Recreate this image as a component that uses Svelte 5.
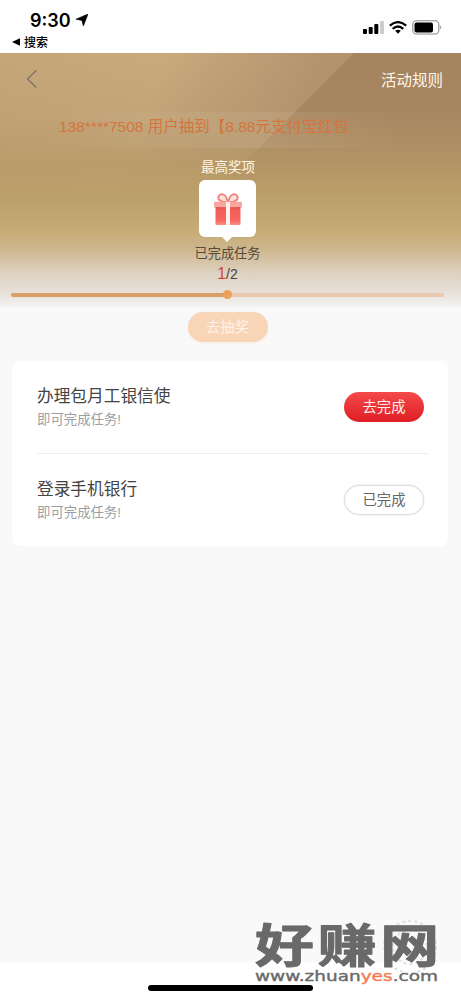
<script>
    let winner = '138****7508 用户抽到【8.88元支付宝红包';
    let done = 1;
    let total = 2;

    let tasks = [
        { title: '办理包月工银信使', note: '即可完成任务!', finished: false },
        { title: '登录手机银行', note: '即可完成任务!', finished: true }
    ];
</script>

<div class="screen">
    <header class="status">
        <div class="status-left">
            <div class="time">
                <span>9:30</span>
                <svg width="12" height="12" viewBox="0 0 12 12"><path d="M12 0L7.4 12L5.9 6.4L0 5.2Z" stroke="#000" stroke-width=".6" /></svg>
            </div>
            <div class="return">
                <svg width="8" height="8" viewBox="0 0 8 8"><path d="M0 4L8 .3V7.7Z" /></svg>
                <span>搜索</span>
            </div>
        </div>
        <div class="status-right">
            <svg width="21" height="13" viewBox="0 0 21 13">
                <rect x="0" y="8" width="4" height="5" rx="1" />
                <rect x="5.7" y="6" width="4" height="7" rx="1" />
                <rect x="11.3" y="3" width="4" height="10" rx="1" />
                <rect x="17" y="0" width="4" height="13" rx="1" fill="#ccc" />
            </svg>
            <svg width="18" height="13" viewBox="0 0 18 13" fill="none" stroke="#000" stroke-width="2.2">
                <path d="M.8 4.7Q9-2.5 17.2 4.7" />
                <path d="M3.7 7.8Q9 3.2 14.3 7.8" />
                <path d="M6.2 9.7Q9 7.8 11.8 9.7L9 12.8Z" fill="#000" stroke="none" />
            </svg>
            <svg width="30" height="15" viewBox="0 0 30 15">
                <rect x=".8" y=".8" width="26" height="13.2" rx="3.6" fill="none" stroke="#8c8c8c" stroke-width="1.1" />
                <rect x="2.5" y="2.5" width="18.5" height="10" rx="2" />
                <path d="M28.2 5.2Q30.4 7.4 28.2 9.6Z" fill="#999" />
            </svg>
        </div>
    </header>

    <section class="hero">
        <nav>
            <svg width="12" height="20" viewBox="0 0 12 20" fill="none" stroke="#7f7466" stroke-width="1.4">
                <path d="M10.2 1.5L1.5 10L10.2 18.5" />
            </svg>
            <span>活动规则</span>
        </nav>
        <div class="ticker">{winner}</div>
        <div class="top-prize">最高奖项</div>
        <div class="prize">
            <svg width="30" height="34" viewBox="0 0 30 34">
                <defs>
                    <linearGradient id="box" x2="0" y2="1">
                        <stop offset="0" stop-color="#f05a55" />
                        <stop offset="0.75" stop-color="#f7665f" />
                        <stop offset="1" stop-color="#f79188" />
                    </linearGradient>
                </defs>
                <g fill="#fde0d8" stroke="#ec7f77" stroke-width="1.7">
                    <path d="M14.5 10C9 10.5 4 8 5.5 4.5C7.500 .5 13.500 1.500 14.500 10Z" />
                    <path d="M15.5 10C21 10.5 26 8 24.500 4.500C22.500 .5 16.500 1.500 15.500 10Z" />
                </g>
                <rect x="2.5" y="14" width="25" height="19" rx="1" fill="url(#box)" />
                <rect x="1" y="9.8" width="28" height="5.7" rx="1" fill="#f9a79e" />
                <path d="M2.5 15.8H27.5" stroke="#e0504c" />
                <path d="M13 9.8H17V33H13Z" fill="#fff0e9" />
            </svg>
        </div>
        <div class="done-label">已完成任务</div>
        <div class="count"><b>{done}</b>/{total}</div>
        <div class="progress">
            <div class="bar" style="width: {(done / total) * 100}%"></div>
        </div>
    </section>

    <main>
        <button class="draw">去抽奖</button>
        <div class="card">
            {#each tasks as task}
                <div class="task">
                    <div>
                        <h3>{task.title}</h3>
                        <p>{task.note}</p>
                    </div>
                    <button class:finished={task.finished}>{task.finished ? '已完成' : '去完成'}</button>
                </div>
            {/each}
        </div>
    </main>

    <footer>
        <div class="home-bar"></div>
    </footer>

    <svg class="watermark" width="190" height="70" viewBox="0 0 190 70">
        <g fill="none" stroke="#e0e0e0" stroke-width="2" stroke-dasharray="3 3">
            <circle cx="157" cy="27" r="26" />
            <circle cx="157" cy="27" r="17" />
            <circle cx="157" cy="27" r="8" />
        </g>
        <text class="brand" x="2" y="41.5" textLength="188" lengthAdjust="spacingAndGlyphs">好赚网</text>
        <text class="url" x="2" y="60.5" textLength="183" lengthAdjust="spacingAndGlyphs">www.zhuan<tspan class="accent">yes</tspan>.com</text>
    </svg>
</div>

<style>
    :global(body) {
        margin: 0;
        background: #fff;
    }

    .screen {
        position: relative;
        display: flex;
        flex-direction: column;
        width: 461px;
        height: 1000px;
        overflow: hidden;
        font-family: "Liberation Sans", "Noto Sans CJK SC", sans-serif;
        color: #444;
    }

    .status {
        display: flex;
        justify-content: space-between;
        box-sizing: border-box;
        height: 53px;
        padding: 9px 19px 0 12px;
        color: #000;
        background: #fefefe;
    }

    .time {
        display: flex;
        align-items: center;
        gap: 5px;
        height: 22px;
        padding-left: 18px;
        font: 600 18px/23px Inter, sans-serif;
    }

    .return {
        display: flex;
        align-items: center;
        gap: 4px;
        height: 21px;
        font-size: 12px;
        font-weight: 500;
    }

    .status-right {
        display: flex;
        align-items: center;
        gap: 5px;
        height: 37px;
    }

    .hero {
        display: flex;
        flex-direction: column;
        align-items: center;
        height: 254px;
        background:
            linear-gradient(to bottom, rgba(178, 148, 104, 0) 0%, rgba(178, 148, 104, 0.25) 25%, rgba(182, 152, 104, 0.8) 43%, #bca069 57%, #c6aa73 69%, #cdb68d 77%, #ded2c1 87%, #e8e2dc 95%, #f4f3f2 100%),
            linear-gradient(135deg, transparent 49.4%, #a4835e 49.6%),
            linear-gradient(112deg, #c5a679 0%, #c8aa7d 30%, #b3936e 58%, #ae8e69 100%);
    }

    nav {
        display: flex;
        justify-content: space-between;
        align-items: center;
        box-sizing: border-box;
        width: 100%;
        height: 52px;
        padding: 0 18px 0 26px;
        font-size: 15.5px;
        color: #fff5e8;
    }

    .ticker {
        box-sizing: border-box;
        width: 345px;
        height: 36px;
        margin-top: 7px;
        padding-left: 1px;
        font-size: 15.5px;
        line-height: 30px;
        white-space: nowrap;
        color: #d5753c;
        background: linear-gradient(to right, transparent, rgba(255, 255, 255, 0.08) 60%, transparent);
    }

    .top-prize {
        margin-top: 9px;
        margin-right: 5px;
        font-size: 13.5px;
        line-height: 22px;
        color: #fff5e6;
    }

    .prize {
        position: relative;
        display: flex;
        justify-content: center;
        align-items: center;
        width: 57px;
        height: 57px;
        margin-top: 1px;
        margin-right: 6px;
        border-radius: 6px;
        background: #fff;
    }

    .prize::after {
        content: '';
        position: absolute;
        bottom: -5px;
        left: 23px;
        border: 5px solid transparent;
        border-top-color: #fff;
        border-bottom: 0;
    }

    .done-label {
        margin-top: 7px;
        margin-right: 6px;
        font-size: 13.2px;
        line-height: 20px;
        color: #554939;
    }

    .count {
        height: 20px;
        margin-right: 6px;
        font-size: 14px;
        line-height: 20px;
    }

    .count b {
        font-size: 16px;
        font-weight: 400;
        color: #d6453b;
    }

    .progress {
        width: 433px;
        height: 4px;
        margin-top: 9px;
        margin-right: 6px;
        border-radius: 2px;
        background: #eac9ad;
    }

    .bar {
        position: relative;
        height: 4px;
        border-radius: 2px;
        background: #d9a065;
    }

    .bar::after {
        content: '';
        position: absolute;
        top: -3px;
        right: -4.5px;
        width: 9px;
        height: 9px;
        border-radius: 50%;
        background: #eba05c;
    }

    main {
        display: flex;
        flex: 1;
        flex-direction: column;
        align-items: center;
        background: #f9f9f9;
    }

    button {
        box-sizing: border-box;
        width: 80px;
        height: 30px;
        padding: 0;
        border: 0;
        border-radius: 15px;
        font: inherit;
        font-size: 14.3px;
        line-height: 30px;
        color: #ffecec;
        background: linear-gradient(#f4494a, #df1e25);
    }

    .draw {
        margin-top: 5px;
        margin-right: 6px;
        color: #fff3e8;
        background: #f9d5b8;
        box-shadow: 0 1px 3px #faeadd;
    }

    .card {
        box-sizing: border-box;
        width: 436px;
        height: 185px;
        margin-top: 19px;
        margin-right: 1px;
        padding: 0 20px 0 25px;
        border-radius: 8px;
        background: #fff;
    }

    .task {
        display: flex;
        justify-content: space-between;
        box-sizing: border-box;
        height: 92px;
        padding: 23px 4px 0 0;
    }

    .task + .task {
        border-top: 1px solid #eee;
    }

    .task button {
        margin-top: 8px;
    }

    .task .finished {
        border: 1px solid #dedede;
        line-height: 28px;
        color: #666;
        background: #fff;
        box-shadow: 0 0 2px #ddd;
    }

    h3 {
        margin: 0;
        font-size: 16.7px;
        font-weight: 400;
        line-height: 26px;
        color: #444;
    }

    p {
        margin: 0;
        font-size: 13.4px;
        line-height: 20px;
        color: #9b9fa2;
    }

    footer {
        display: flex;
        justify-content: center;
        height: 38px;
        background: #fff;
    }

    .home-bar {
        width: 165px;
        height: 6px;
        margin-top: 23px;
        border-radius: 3px;
        background: #000;
    }

    .watermark {
        position: absolute;
        left: 253px;
        top: 920px;
        overflow: visible;
    }

    .brand {
        font-family: "Liberation Sans", "Noto Sans CJK SC", sans-serif;
        font-size: 46px;
        font-weight: 700;
        letter-spacing: 3px;
        fill: #696969;
        stroke: #696969;
        stroke-width: 1;
        stroke-linejoin: round;
    }

    .url {
        font-family: "DejaVu Sans", sans-serif;
        font-size: 14.5px;
        fill: #696969;
        stroke: #696969;
        stroke-width: 0.4;
    }

    .accent {
        fill: #f47b50;
        stroke: #f47b50;
    }
</style>
